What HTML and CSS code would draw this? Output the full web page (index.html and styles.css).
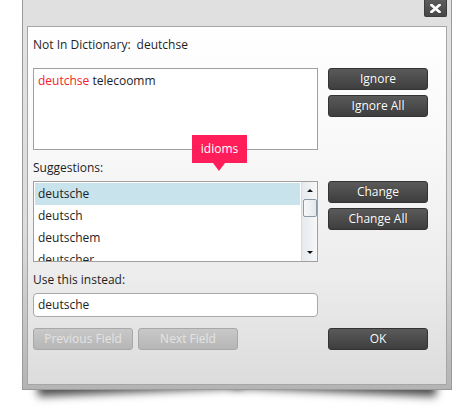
FILE: index.html
```html
<!DOCTYPE html>
<html>
<head>
<meta charset="utf-8">
<link rel="stylesheet" href="styles.css">
</head>
<body>
<div class="stage">
  <div class="window">
    <div class="titlebar">
      <div class="close">
        <svg width="11" height="9" viewBox="0 0 11 9"><path d="M1.5 1 L9.5 8 M9.5 1 L1.5 8" stroke="#fff" stroke-width="2.6" stroke-linecap="square"/></svg>
      </div>
    </div>
    <div class="panel">
      <div class="nid"><span>Not In Dictionary:</span><span class="nid-word">deutchse</span></div>
      <div class="row row-top">
        <div class="textbox"><span class="err">deutchse</span> telecoomm</div>
        <div class="btns">
          <button class="btn">Ignore</button>
          <button class="btn">Ignore All</button>
        </div>
      </div>
      <div class="label label-sugg">Suggestions:</div>
      <div class="row row-list">
        <div class="listbox">
          <ul class="items">
            <li class="item selected">deutsche</li>
            <li class="item">deutsch</li>
            <li class="item">deutschem</li>
            <li class="item">deutscher</li>
          </ul>
          <div class="scroll">
            <div class="arrow-up"></div>
            <div class="thumb"></div>
            <div class="scroll-fill"></div>
            <div class="arrow-down"></div>
          </div>
        </div>
        <div class="btns">
          <button class="btn">Change</button>
          <button class="btn">Change All</button>
        </div>
      </div>
      <div class="label label-use">Use this instead:</div>
      <div class="input">deutsche</div>
      <div class="row row-bottom">
        <div class="navs">
          <button class="btn btn-disabled">Previous Field</button>
          <button class="btn btn-disabled">Next Field</button>
        </div>
        <button class="btn">OK</button>
      </div>
      <div class="tip">idioms</div>
    </div>
  </div>
</div>
</body>
</html>
```
FILE: styles.css
```css
* { box-sizing: border-box; }
html, body { margin: 0; padding: 0; background: #fff; }
body {
  font-family: "Open Sans", "Noto Sans", sans-serif;
  font-size: 12px;
  color: #1e1e1e;
  width: 475px;
  height: 412px;
  overflow: hidden;
}
.stage {
  padding-left: 22px;
  position: relative;
  z-index: 0;
}
.window {
  position: relative;
  width: 430px;
  height: 390px;
  border: 1px solid #9a9a9a;
  border-top: none;
  background: linear-gradient(#e2e2e2 0%, #dcdcdc 60%, #b4b4b4 100%);
  display: flex;
  flex-direction: column;
}
.window::before, .window::after {
  content: "";
  position: absolute;
  z-index: -1;
  bottom: 8px;
  width: 205px;
  height: 20px;
  box-shadow: 0 11px 9px rgba(0,0,0,0.7);
}
.window::before { left: 14px; transform: rotate(-2.5deg); }
.window::after { right: 14px; transform: rotate(2.5deg); }

.titlebar {
  height: 26px;
  display: flex;
  justify-content: flex-end;
  padding-right: 4px;
  background: #e0e0e0;
}
.close {
  width: 23px;
  height: 17px;
  background: linear-gradient(#5c5c5c, #474747);
  border: 1px solid #3c3c3c;
  border-top: none;
  border-radius: 0 0 2px 2px;
  display: flex;
  align-items: center;
  justify-content: center;
}
.panel {
  position: relative;
  margin: 0 4px;
  height: 359px;
  border: 1px solid #a6a6a6;
  background: linear-gradient(#ffffff 0%, #f8f8f8 35%, #ececec 70%, #dcdcdc 100%);
  padding: 9px 0 0 5px;
}
.nid {
  height: 18px;
  line-height: 18px;
  white-space: nowrap;
}
.nid-word { margin-left: 6px; }
.row {
  display: flex;
  gap: 10px;
}
.row-top { margin-top: 14px; }
.textbox {
  width: 285px;
  height: 82px;
  border: 1px solid #a0a0a0;
  background: #fff;
  padding: 4px 4px;
  line-height: 16px;
}
.err { color: #f2202a; }
.btns {
  display: flex;
  flex-direction: column;
  gap: 5px;
}
.btn {
  width: 100px;
  height: 22px;
  padding: 0;
  margin: 0;
  font-family: "Open Sans", "Noto Sans", sans-serif;
  font-size: 12px;
  line-height: 18px;
  color: #fff;
  background: linear-gradient(#5a5a5a, #3e3e3e);
  border: 1px solid #333;
  border-radius: 3px;
  text-shadow: 0 0 1px rgba(0,0,0,0.4);
}
.btn-disabled {
  color: #e4e4e4;
  background: linear-gradient(#c8c8c8, #b6b6b6);
  border-color: #a8a8a8;
  text-shadow: none;
}
.label {
  height: 18px;
  line-height: 18px;
}
.label-sugg { margin-top: 9px; }
.row-list { margin-top: 4px; }
.listbox {
  width: 285px;
  height: 81px;
  border: 1px solid #a0a0a0;
  background: #fff;
  display: flex;
}
.items {
  list-style: none;
  margin: 0;
  padding: 1px;
  flex: 1;
  overflow: hidden;
}
.item {
  height: 22px;
  line-height: 22px;
  padding-left: 3px;
}
.selected { background: #c9e3ec; }
.scroll {
  width: 16px;
  border-left: 1px solid #d6dbe0;
  background: linear-gradient(to right, #e6eaee, #f6f7f8);
  display: flex;
  flex-direction: column;
  align-items: center;
}
.arrow-up {
  margin-top: 7px;
  width: 0; height: 0;
  border-left: 3px solid transparent;
  border-right: 3px solid transparent;
  border-bottom: 3px solid #111;
}
.thumb {
  margin-top: 7px;
  width: 14px;
  height: 18px;
  border: 1px solid #8e9aa6;
  border-radius: 2px;
  background: linear-gradient(to right, #f6f8fa, #e4e8ec);
}
.scroll-fill { flex: 1; }
.arrow-down {
  margin-bottom: 7px;
  width: 0; height: 0;
  border-left: 3px solid transparent;
  border-right: 3px solid transparent;
  border-top: 3px solid #111;
}
.label-use { margin-top: 9px; }
.input {
  margin-top: 4px;
  width: 285px;
  height: 24px;
  border: 1px solid #a8a8a8;
  border-radius: 4px;
  background: #fff;
  padding-left: 4px;
  line-height: 22px;
}
.row-bottom {
  margin-top: 11px;
  width: 395px;
  justify-content: space-between;
}
.navs {
  display: flex;
  gap: 5px;
}
.tip {
  position: absolute;
  left: 164px;
  top: 108px;
  width: 55px;
  height: 28px;
  background: #ff1e5a;
  color: #fff;
  font-size: 12px;
  line-height: 28px;
  text-align: center;
}
.tip::after {
  content: "";
  position: absolute;
  left: 21px;
  top: 28px;
  width: 0; height: 0;
  border-left: 6px solid transparent;
  border-right: 6px solid transparent;
  border-top: 8px solid #ff1e5a;
}
```
